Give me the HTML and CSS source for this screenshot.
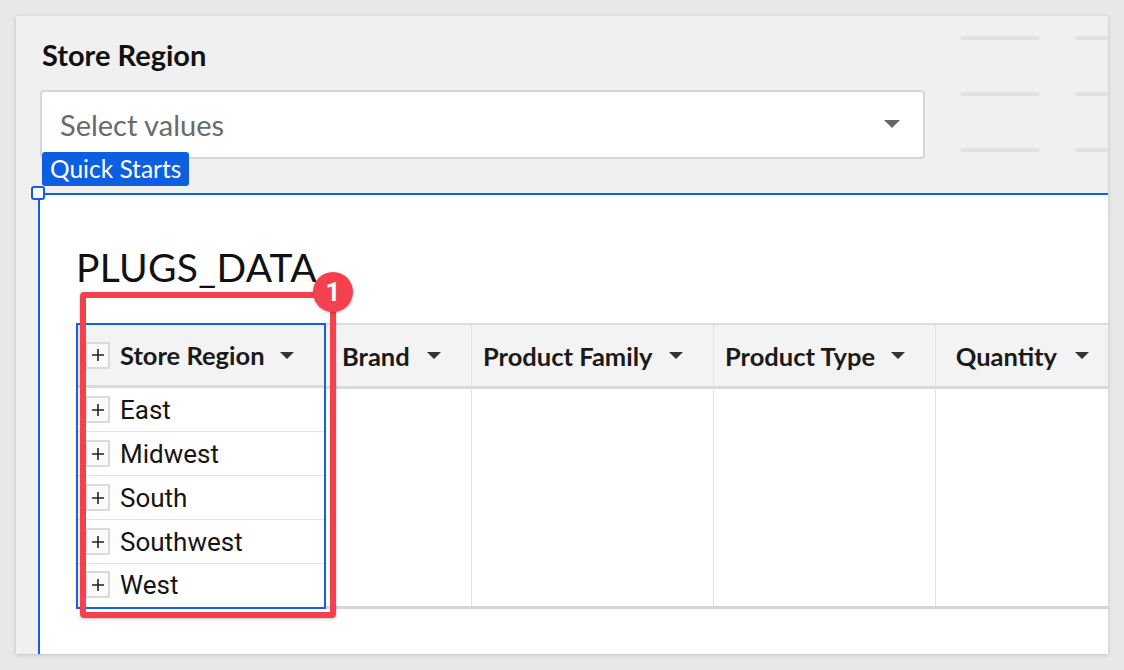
FILE: index.html
```html
<!DOCTYPE html>
<html>
<head>
<meta charset="utf-8">
<link rel="stylesheet" href="styles.css">
</head>
<body>
<div class="panel">
  <div class="top">
    <div class="filter">
      <div class="filter-label">Store Region</div>
      <div class="select">
        <span class="placeholder">Select values</span>
        <svg class="select-caret" width="16" height="8" viewBox="0 0 16 8"><path d="M0 0H16L8 8Z" fill="#666"/></svg>
      </div>
    </div>
    <div class="skeleton">
      <span></span><span></span>
      <span></span><span></span>
      <span></span><span></span>
    </div>
  </div>
  <div class="frame">
    <div class="qs-tag">Quick Starts</div>
    <div class="handle"></div>
    <h1 class="title">PLUGS_DATA</h1>
    <div class="table">
      <div class="col col-first">
        <div class="th">
          <span class="plus"><svg width="12" height="12" viewBox="0 0 12 12"><path d="M6 0V12M0 6H12" stroke="#222" stroke-width="1.6"/></svg></span>
          <span class="th-text">Store Region</span>
          <svg class="caret" width="14" height="7" viewBox="0 0 14 7"><path d="M0 0H14L7 7Z" fill="#333"/></svg>
        </div>
        <div class="tb">
          <div class="row"><span class="plus"><svg width="12" height="12" viewBox="0 0 12 12"><path d="M6 0V12M0 6H12" stroke="#222" stroke-width="1.6"/></svg></span><span class="cell-text">East</span></div>
          <div class="row"><span class="plus"><svg width="12" height="12" viewBox="0 0 12 12"><path d="M6 0V12M0 6H12" stroke="#222" stroke-width="1.6"/></svg></span><span class="cell-text">Midwest</span></div>
          <div class="row"><span class="plus"><svg width="12" height="12" viewBox="0 0 12 12"><path d="M6 0V12M0 6H12" stroke="#222" stroke-width="1.6"/></svg></span><span class="cell-text">South</span></div>
          <div class="row"><span class="plus"><svg width="12" height="12" viewBox="0 0 12 12"><path d="M6 0V12M0 6H12" stroke="#222" stroke-width="1.6"/></svg></span><span class="cell-text">Southwest</span></div>
          <div class="row"><span class="plus"><svg width="12" height="12" viewBox="0 0 12 12"><path d="M6 0V12M0 6H12" stroke="#222" stroke-width="1.6"/></svg></span><span class="cell-text">West</span></div>
        </div>
      </div>
      <div class="col col-brand">
        <div class="th"><span class="th-text">Brand</span><svg class="caret" width="14" height="7" viewBox="0 0 14 7"><path d="M0 0H14L7 7Z" fill="#333"/></svg></div>
        <div class="tb"></div>
      </div>
      <div class="col col-family">
        <div class="th"><span class="th-text">Product Family</span><svg class="caret" width="14" height="7" viewBox="0 0 14 7"><path d="M0 0H14L7 7Z" fill="#333"/></svg></div>
        <div class="tb"></div>
      </div>
      <div class="col col-type">
        <div class="th"><span class="th-text">Product Type</span><svg class="caret" width="14" height="7" viewBox="0 0 14 7"><path d="M0 0H14L7 7Z" fill="#333"/></svg></div>
        <div class="tb"></div>
      </div>
      <div class="col col-qty">
        <div class="th th-right"><span class="th-text">Quantity</span><svg class="caret" width="14" height="7" viewBox="0 0 14 7"><path d="M0 0H14L7 7Z" fill="#333"/></svg></div>
        <div class="tb"></div>
      </div>
    </div>
    <div class="annotation"></div>
    <div class="badge">1</div>
  </div>
</div>
</body>
</html>
```

FILE: styles.css
```css
* { box-sizing: border-box; }
html, body { margin: 0; padding: 0; }
body {
  background: #e8e8e8;
  width: 1124px;
  height: 670px;
  overflow: hidden;
  font-family: "Lato", "Open Sans", sans-serif;
}
.panel {
  margin: 16px 0 0 16px;
  width: 1092px;
  height: 638px;
  background: #f0f0f0;
  box-shadow: 0 1px 4px rgba(0,0,0,0.18);
  overflow: hidden;
  display: flex;
  flex-direction: column;
}
.top {
  display: flex;
  padding-left: 24px;
  height: 177px;
  flex-shrink: 0;
}
.filter {
  width: 885px;
  flex-shrink: 0;
  padding-top: 21px;
}
.filter-label {
  font-weight: 700;
  font-size: 29px;
  line-height: 35px;
  color: #111;
  padding-left: 2px;
}
.select {
  margin-top: 18px;
  height: 69px;
  background: #fff;
  border: 2px solid #d6d6d6;
  border-radius: 4px;
  display: flex;
  align-items: center;
  padding: 0 23px 0 18px;
}
.placeholder {
  font-size: 29px;
  color: #6a6a6a;
  flex: 1;
}
.select-caret { margin-top: -2px; }
.skeleton {
  flex-shrink: 0;
  margin-left: 35px;
  padding-top: 20px;
  display: grid;
  grid-template-columns: 80px 80px;
  column-gap: 35px;
  row-gap: 52px;
  align-content: start;
}
.skeleton span {
  display: block;
  height: 4px;
  border-radius: 2px;
  background: #e1e1e1;
}
.frame {
  position: relative;
  flex: 1;
  margin-left: 22px;
  background: #fff;
  border-top: 2px solid #0d5fe3;
  border-left: 2px solid #0d5fe3;
  padding: 48px 0 0 36px;
}
.qs-tag {
  position: absolute;
  left: 2px;
  top: -43px;
  height: 34px;
  padding: 0 8px;
  background: #0b5fe0;
  color: #fff;
  font-size: 24.5px;
  line-height: 34px;
  border-radius: 3px;
}
.handle {
  position: absolute;
  left: -9px;
  top: -9px;
  width: 14px;
  height: 14px;
  border: 2px solid #0d5fe3;
  background: #fff;
  border-radius: 3px;
}
.title {
  margin: 0;
  font-weight: 400;
  font-size: 39px;
  line-height: 48px;
  color: #111;
  letter-spacing: 0.3px;
}
.table {
  margin-top: 32px;
  display: flex;
  width: 1100px;
}
.col {
  display: flex;
  flex-direction: column;
  flex-shrink: 0;
  border-top: 2px solid #dcdcdc;
  border-bottom: 3px solid #d6d6d6;
}
.col-first { width: 250px; border: 2px solid #1461e6; border-bottom-width: 2px; }
.col-brand { width: 146px; }
.col-family { width: 242px; }
.col-type { width: 222px; }
.col-qty { width: 184px; }
.th {
  height: 64px;
  background: #f3f3f3;
  border-bottom: 3px solid #d9d9d9;
  border-right: 1px solid #e2e2e2;
  display: flex;
  align-items: center;
  padding: 0 30px 0 11px;
  font-weight: 700;
  font-size: 25.5px;
  color: #1a1a1a;
}
.col-first .th { padding-left: 7px; border-right: none; height: 63px; }
.col-brand .th { padding-left: 16px; }
.th .caret { margin-left: auto; }
.th-right { justify-content: flex-end; }
.th-right .caret { margin-left: 18px; }
.col-first .th-text { margin-left: 10px; }
.tb {
  height: 217px;
  border-right: 1px solid #e2e2e2;
}
.col-first .tb { border-right: none; height: 217px; }
.plus {
  width: 25px;
  height: 27px;
  border: 2px solid #dadada;
  background: #fafafa;
  display: flex;
  align-items: center;
  justify-content: center;
  flex-shrink: 0;
}
.row {
  height: 44px;
  border-bottom: 1.5px solid #e2e2e2;
  display: flex;
  align-items: center;
  padding-left: 7px;
}
.row:last-child { border-bottom: none; height: 41px; }
.cell-text {
  margin-left: 10px;
  font-family: "Roboto", sans-serif;
  font-size: 26px;
  color: #151515;
}
.annotation {
  position: absolute;
  left: 40px;
  top: 97px;
  width: 256px;
  height: 326px;
  border: 6px solid #f4404f;
  border-radius: 4px;
  box-shadow: 0 1px 3px rgba(0,0,0,0.25);
}
.badge {
  position: absolute;
  left: 273px;
  top: 77px;
  width: 40px;
  height: 40px;
  border-radius: 50%;
  background: #f4404f;
  color: #fff;
  font-family: "Roboto", sans-serif;
  font-weight: 700;
  font-size: 26px;
  line-height: 40px;
  text-align: center;
  box-shadow: 0 1px 3px rgba(0,0,0,0.25);
}
```
